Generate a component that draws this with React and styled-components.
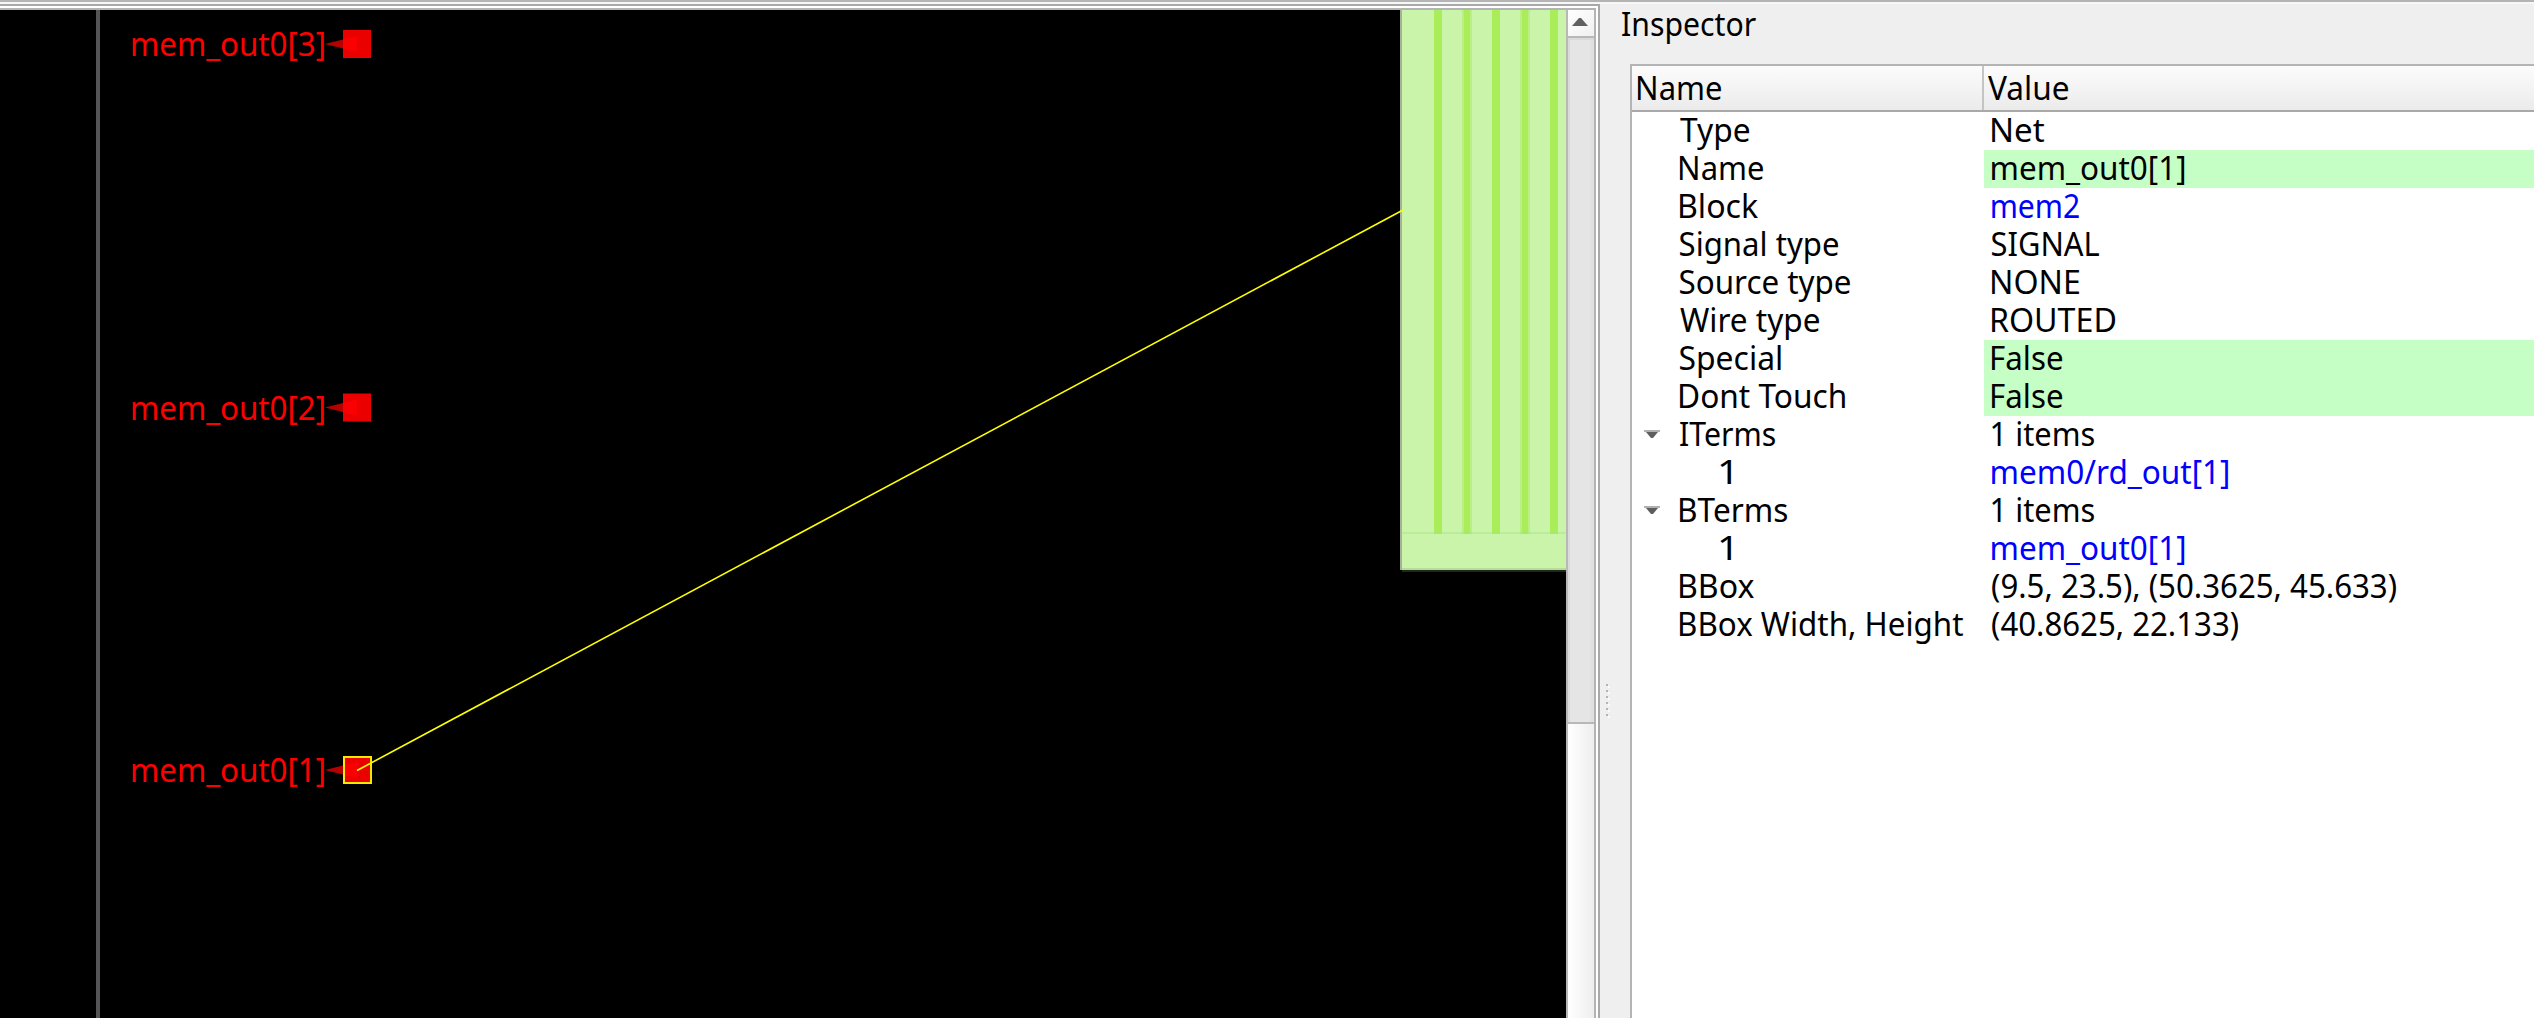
import React, { useLayoutEffect, useRef } from 'react';
import styled, { createGlobalStyle } from 'styled-components';

const FAMILY = '"Noto Sans", "Open Sans", sans-serif';
const SIZE = 33;

const Global = createGlobalStyle`
  * { box-sizing: border-box; }
  html, body { margin: 0; overflow: hidden; }
  body { background: #efefef; font: ${SIZE}px/35px ${FAMILY}; color: #000; }
`;

const Window = styled.div`
  display: flex;
  width: 2534px;
  height: 1018px;
  border-top: 2px solid #b4b4b4;
  box-shadow: inset 0 2px #f7f7f7;
  overflow: hidden;
`;

const ViewFrame = styled.div`
  display: flex;
  width: 1600px;
  margin-top: 2px;
  border: solid #a9a9a9;
  border-width: 2px 2px 0 0;
  background: #fff;
  padding: 2px 2px 0 0;
`;

const ViewInner = styled.div`
  display: flex;
  flex: 1;
  border: solid #b4b4b4;
  border-width: 2px 2px 0 0;
`;

const Canvas = styled.svg`
  display: block;
  width: 1566px;
  height: 1008px;
  background: #000;
`;

const ScrollBar = styled.div`
  display: flex;
  flex-direction: column;
  flex: 1;
  border-left: 2px solid #b8b8b8;
  background: linear-gradient(90deg, #fff, #eee);
`;

const ScrollButton = styled.div`
  display: flex;
  align-items: center;
  justify-content: center;
  height: 26px;
  padding-right: 2px;
  background: linear-gradient(135deg, #fff, #f0f0f0);
`;

const ScrollThumb = styled.div`
  height: 688px;
  border: solid #b8b8b8;
  border-width: 2px 0;
  background: #e5e5e5;
  box-shadow: inset 2px 2px #dadada, inset -4px 0 #e0e0e0;
`;

const Splitter = styled.div`
  display: flex;
  flex-direction: column;
  gap: 4px;
  width: 22px;
  padding: 682px 0 0 6px;
`;

const Dot = styled.span`
  width: 2px;
  height: 2px;
  background: #b4b4b4;
  box-shadow: 2px 2px #fafafa;
`;

const Inspector = styled.section`
  flex: 1;
  display: flex;
  flex-direction: column;
`;

const Title = styled.div`
  height: 62px;
  padding: 4px 0 0 0;
`;

const Tree = styled.div`
  flex: 1;
  margin-left: 8px;
  border: solid #b4b4b4;
  border-width: 2px 0 0 2px;
  background: #fff;
`;

const HeaderRow = styled.div`
  display: flex;
  height: 46px;
  border-bottom: 2px solid #a9a9a9;
  background: linear-gradient(#fcfcfc, #ebebeb);
`;

const HeaderCell = styled.div`
  width: ${(p) => p.$width || 'auto'};
  padding: 4px 0 0 ${(p) => p.$pad}px;
  border-right: ${(p) => (p.$width ? '2px solid #c4c4c4' : '0')};
`;

const Row = styled.div`
  display: flex;
  height: 38px;
`;

const NameCell = styled.div`
  display: flex;
  width: 352px;
  padding-left: ${(p) => (p.$nested ? 88 : 12)}px;
`;

const Expander = styled.span`
  display: flex;
  align-items: center;
  width: 35.5px;
`;

const ValueCell = styled.div`
  flex: 1;
  padding-left: 8px;
  color: ${(p) => (p.$link ? '#0000ff' : '#000')};
  background: ${(p) => (p.$editable ? '#c5ffc5' : 'transparent')};
`;

const TextSpan = styled.span`
  display: inline-block;
  white-space: pre;
  transform-origin: 0 0;
`;

/* Condenses a string so that its visible glyphs span exactly `w` pixels.
   Glyph bounds are whole pixels, so they are taken at ten times the size. */
function Text({ w, children }) {
  const ref = useRef(null);
  useLayoutEffect(() => {
    const ctx = document.createElement('canvas').getContext('2d');
    ctx.font = `${SIZE * 10}px ${FAMILY}`;
    const m = ctx.measureText(children);
    const left = m.actualBoundingBoxLeft / 10;
    const k = w / (left + m.actualBoundingBoxRight / 10);
    ref.current.style.transform = `translateX(${left * k}px) scaleX(${k})`;
  }, [w, children]);
  return <TextSpan ref={ref}>{children}</TextSpan>;
}

const rows = [
  ['Type', 69, 'Net', 52],
  ['Name', 83, 'mem_out0[1]', 192, 'edit'],
  ['Block', 78, 'mem2', 87, 'link'],
  ['Signal type', 158, 'SIGNAL', 107],
  ['Source type', 170, 'NONE', 87],
  ['Wire type', 139, 'ROUTED', 123],
  ['Special', 101, 'False', 70, 'edit'],
  ['Dont Touch', 165, 'False', 70, 'edit'],
  ['ITerms', 95, '1 items', 102, 'open'],
  ['1', 11, 'mem0/rd_out[1]', 236, 'link', true],
  ['BTerms', 107, '1 items', 102, 'open'],
  ['1', 11, 'mem_out0[1]', 192, 'link', true],
  ['BBox', 74, '(9.5, 23.5), (50.3625, 45.633)', 404],
  ['BBox Width, Height', 283, '(40.8625, 22.133)', 246],
];

const Arrow = ({ up }) => (
  <svg width="16" height="10" viewBox="0 0 16 10">
    {up ? (
      <path d="M7 0H9L16 8H0Z" fill="#606060" />
    ) : (
      <>
        <path d="M2 2H14L9 8H7Z" fill="#5e5e5e" />
        <path d="M0 0H16V2H0Z" fill="#b0b0b0" />
      </>
    )}
  </svg>
);

const Pin = ({ y, label, selected }) => (
  <>
    <text x="130" y={y + 12} fill="#f00" fontFamily={FAMILY} fontSize={SIZE} textLength="196" lengthAdjust="spacingAndGlyphs">
      {label}
    </text>
    <path d={`M325 ${y}L343 ${y - 4.5}V${y + 4.5}Z`} fill="#b60000" />
    <rect x="343" y={y - 14} width="28" height="28" fill="#eb0000" />
    <path d={`M343 ${y - 4.5}L357 ${y - 8}V${y + 8}L343 ${y + 4.5}Z`} fill="#fb0000" />
    {selected && <rect x="344" y={y - 13} width="27" height="26" fill="none" stroke="#ffe600" strokeWidth="2" />}
  </>
);

export default function App() {
  return (
    <>
      <Global />
      <Window>
        <ViewFrame>
          <ViewInner>
            <Canvas viewBox="0 10 1566 1008">
              <rect x="96" y="10" width="4" height="1008" fill="#555557" />
              <Pin y={44} label="mem_out0[3]" />
              <Pin y={407.5} label="mem_out0[2]" />
              <Pin y={770} label="mem_out0[1]" selected />
              <rect x="1400" y="10" width="2" height="560" fill="#a4b298" />
              <rect x="1402" y="10" width="164" height="560" fill="#c9f4a9" />
              {[1434, 1464, 1492, 1522, 1550].map((x, i) => (
                <g key={x}>
                  {i % 2 === 1 && <rect x={x - 2} y="10" width="10" height="524" fill="#b9ee89" />}
                  <rect x={x} y="10" width={i % 2 ? 6 : 8} height="524" fill="#a9ed58" />
                </g>
              ))}
              <rect x="1402" y="532" width="164" height="2" fill="#9fe77a" fillOpacity=".4" />
              <rect x="1402" y="568" width="164" height="2" fill="#b5dc98" />
              <rect x="1402" y="570" width="164" height="2" fill="#20271b" />
              <path d="M357 770.5L1403 210" stroke="#ff0" strokeWidth="1.6" />
            </Canvas>
            <ScrollBar>
              <ScrollButton><Arrow up /></ScrollButton>
              <ScrollThumb />
            </ScrollBar>
          </ViewInner>
        </ViewFrame>
        <Splitter>
          {[0, 1, 2, 3, 4, 5].map((i) => <Dot key={i} />)}
        </Splitter>
        <Inspector>
          <Title><Text w={134}>Inspector</Text></Title>
          <Tree>
            <HeaderRow>
              <HeaderCell $width="352px" $pad={5.5}><Text w={83}>Name</Text></HeaderCell>
              <HeaderCell $pad={4}><Text w={80}>Value</Text></HeaderCell>
            </HeaderRow>
            {rows.map(([name, nameW, value, valueW, kind, nested], i) => (
              <Row key={i}>
                <NameCell $nested={nested}>
                  {!nested && <Expander>{kind === 'open' && <Arrow />}</Expander>}
                  <Text w={nameW}>{name}</Text>
                </NameCell>
                <ValueCell $link={kind === 'link'} $editable={kind === 'edit'}>
                  <Text w={valueW}>{value}</Text>
                </ValueCell>
              </Row>
            ))}
          </Tree>
        </Inspector>
      </Window>
    </>
  );
}
